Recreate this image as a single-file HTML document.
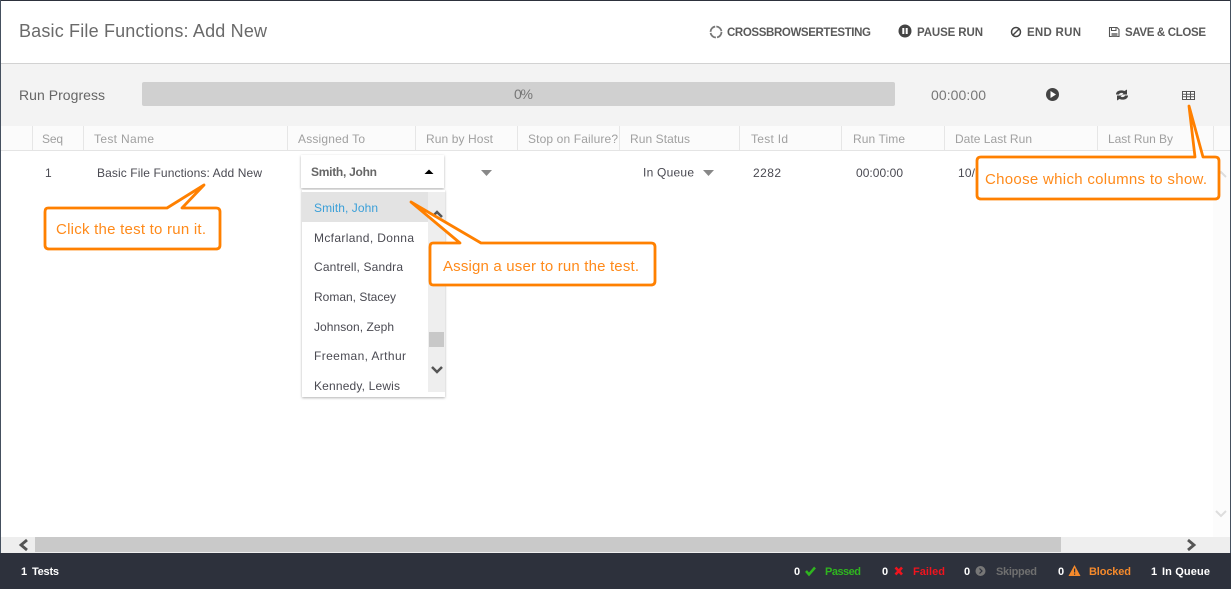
<!DOCTYPE html>
<html><head><meta charset="utf-8"><style>
html,body{margin:0;padding:0;background:#fff;width:1231px;height:589px;overflow:hidden}
svg{display:block}
text{font-family:"Liberation Sans",sans-serif}
.h{font-size:12px;fill:#a0a0a0}
.c{font-size:12px;fill:#4a4a52}
.b{font-size:11.5px;font-weight:bold;fill:#5a5a5a}
.o{font-size:15px;fill:#ff8a1a}
.f{font-size:11px;font-weight:bold}
.call{fill:#fff;stroke:#ff8000;stroke-width:2.800;stroke-linejoin:round}
</style></head><body>
<svg width="1231" height="589" viewBox="0 0 1231 589" xmlns="http://www.w3.org/2000/svg">
<defs>
<filter id="s" x="-10%" y="-10%" width="120%" height="120%"><feDropShadow dx="0" dy="1" stdDeviation="1.2" flood-color="#000" flood-opacity=".3"/></filter>
</defs>
<rect width="1231" height="589" fill="#fff"/>
<rect y="64" width="1231" height="62" fill="#f3f3f3"/>
<rect y="63" width="1231" height="1" fill="#d2d2d2"/>
<rect y="126" width="1231" height="24" fill="#fbfbfb"/>
<rect y="150" width="1231" height="1" fill="#e4e4e4"/>
<g fill="#e6e6e6">
<rect x="32" y="126" width="1" height="24"/><rect x="83" y="126" width="1" height="24"/><rect x="287" y="126" width="1" height="24"/><rect x="415" y="126" width="1" height="24"/><rect x="517" y="126" width="1" height="24"/><rect x="619" y="126" width="1" height="24"/><rect x="739" y="126" width="1" height="24"/><rect x="841" y="126" width="1" height="24"/><rect x="944" y="126" width="1" height="24"/><rect x="1097" y="126" width="1" height="24"/><rect x="1213" y="126" width="1" height="24"/>
</g>
<rect x="1213" y="151" width="17" height="386" fill="#fcfcfc"/>

<text x="19" y="37" font-size="18" fill="#6a6a6a" textLength="248">Basic File Functions: Add New</text>
<text class="b" x="727" y="36" textLength="144">CROSSBROWSERTESTING</text>
<text class="b" x="917" y="36" textLength="66">PAUSE RUN</text>
<text class="b" x="1027" y="36" textLength="54">END RUN</text>
<text class="b" x="1125" y="36" textLength="81">SAVE &amp; CLOSE</text>
<circle cx="716" cy="32" r="5.500" fill="none" stroke="#777" stroke-width="1.800" stroke-dasharray="7.500 1.200"/>
<circle cx="905" cy="31" r="6.500" fill="#444"/><rect x="902.300" y="28" width="2" height="6" fill="#fff"/><rect x="905.700" y="28" width="2" height="6" fill="#fff"/>
<circle cx="1016" cy="32" r="4.500" fill="none" stroke="#444" stroke-width="1.500"/><path d="M1013 35L1019 29" stroke="#444" stroke-width="1.500"/>
<path d="M1109.500 27.500H1117L1119 29.500V36.500H1109.500Z" fill="none" stroke="#555" stroke-width="1.100"/><rect x="1111.500" y="27.500" width="4.500" height="3" fill="none" stroke="#555"/><rect x="1111.500" y="33" width="6" height="3.500" fill="#888"/>

<text x="19" y="100" font-size="14" fill="#666" textLength="86">Run Progress</text>
<rect x="142" y="82" width="753" height="24" rx="2" fill="#d0d0d0"/>
<text x="514" y="99" font-size="14" fill="#777" textLength="19">0%</text>
<text x="931" y="100" font-size="14" fill="#777" textLength="55">00:00:00</text>
<circle cx="1052.500" cy="94.500" r="6.500" fill="#444"/><path d="M1050.500 91V98L1056 94.500Z" fill="#fff"/>
<path d="M1116 94.500C1116 90.500 1121 89.500 1124.500 91L1127 89.500V94.500H1122L1123.500 93.200C1121.500 92.500 1119.500 93 1119 94.500Z" fill="#444"/>
<path d="M1128 95.500C1128 99.500 1123 100.500 1119.500 99L1117 100.500V95.500H1122L1120.500 96.800C1122.500 97.500 1124.500 97 1125 95.500Z" fill="#444"/>
<rect x="1182.500" y="91.500" width="12" height="8" fill="#fff" stroke="#555"/>
<path d="M1182.500 94.200H1194.500M1182.500 96.800H1194.500M1186.500 91.500V99.500M1190.500 91.500V99.500" stroke="#555" fill="none"/>

<text class="h" x="42" y="143" textLength="21">Seq</text>
<text class="h" x="94" y="143" textLength="60">Test Name</text>
<text class="h" x="298" y="143" textLength="67">Assigned To</text>
<text class="h" x="426" y="143" textLength="67">Run by Host</text>
<text class="h" x="528" y="143" textLength="90">Stop on Failure?</text>
<text class="h" x="630" y="143" textLength="60">Run Status</text>
<text class="h" x="751" y="143" textLength="37">Test Id</text>
<text class="h" x="853" y="143" textLength="52">Run Time</text>
<text class="h" x="955" y="143" textLength="77">Date Last Run</text>
<text class="h" x="1108" y="143" textLength="65">Last Run By</text>

<text class="c" x="45" y="177">1</text>
<text class="c" x="97" y="177" textLength="165">Basic File Functions: Add New</text>
<rect x="301" y="155" width="143" height="33" fill="#fff" filter="url(#s)"/>
<text class="b" x="311" y="176" textLength="66" style="font-size:12px;fill:#666">Smith, John</text>
<path d="M424.500 174L429 169.500L433.500 174Z" fill="#000"/>
<path d="M481 170H492L486.500 176Z" fill="#888"/>
<text class="c" x="643" y="176.500" textLength="51">In Queue</text>
<path d="M703 170H714L708.500 176Z" fill="#888"/>
<text class="c" x="753" y="177" textLength="28">2282</text>
<text class="c" x="856" y="177" textLength="47">00:00:00</text>
<text class="c" x="958" y="177" textLength="17">10/</text>

<rect x="302" y="190" width="143" height="207" fill="#fff" filter="url(#s)"/>
<rect x="302" y="192" width="126" height="30" fill="#e3e3e3"/>
<rect x="428" y="192" width="17" height="200" fill="#eee"/>
<rect x="429" y="332" width="15" height="15" fill="#c8c8c8"/>
<path d="M432 217L437 212L442 217" fill="none" stroke="#555" stroke-width="2.500"/>
<path d="M432 367L437 372L442 367" fill="none" stroke="#555" stroke-width="2.500"/>
<text class="c" x="314" y="212" textLength="64" style="fill:#3a9fd8">Smith, John</text>
<text class="c" x="314" y="242" textLength="100">Mcfarland, Donna</text>
<text class="c" x="314" y="271" textLength="89">Cantrell, Sandra</text>
<text class="c" x="314" y="301" textLength="82">Roman, Stacey</text>
<text class="c" x="314" y="331" textLength="80">Johnson, Zeph</text>
<text class="c" x="314" y="360" textLength="92">Freeman, Arthur</text>
<text class="c" x="314" y="390" textLength="86">Kennedy, Lewis</text>

<path d="M1216 177L1221 172L1226 177" fill="none" stroke="#ddd" stroke-width="2"/>
<path d="M1216 511L1221 516L1226 511" fill="none" stroke="#ddd" stroke-width="2"/>
<rect y="537" width="1231" height="16" fill="#eee"/>
<rect x="35" y="537" width="1026" height="15" fill="#c9c9c9"/>
<path d="M27 540L21 545L27 550" fill="none" stroke="#555" stroke-width="2.800"/>
<path d="M1188 540L1194 545L1188 550" fill="none" stroke="#555" stroke-width="2.800"/>

<rect y="553" width="1231" height="36" fill="#2d313c"/>
<rect y="0" width="1231" height="1" fill="#2d313c"/>
<rect x="0" y="0" width="1" height="553" fill="#45505f"/>
<rect x="1230" y="0" width="1" height="553" fill="#45505f"/>
<text class="f" x="21" y="575" fill="#fff">1</text>
<text class="f" x="32" y="575" fill="#fff" textLength="27">Tests</text>
<text class="f" x="794" y="575" fill="#fff">0</text>
<path d="M806 571L809 574.500L815 567.500" fill="none" stroke="#2fb51f" stroke-width="2.500"/>
<text class="f" x="825" y="575" fill="#2fb51f" textLength="36">Passed</text>
<text class="f" x="882" y="575" fill="#fff">0</text>
<path d="M895.500 567.500L902 574.500M902 567.500L895.500 574.500" stroke="#f0141e" stroke-width="2.600"/>
<text class="f" x="913" y="575" fill="#f0141e" textLength="32">Failed</text>
<text class="f" x="964" y="575" fill="#fff">0</text>
<circle cx="980.500" cy="571" r="5" fill="#777"/><path d="M979.500 568.500L982 571L979.500 573.500" fill="none" stroke="#2d313c" stroke-width="1.200"/>
<text class="f" x="996" y="575" fill="#6f6f6f" textLength="41">Skipped</text>
<text class="f" x="1058" y="575" fill="#fff">0</text>
<path d="M1074.500 565L1080.500 576H1068.500Z" fill="#f58a2c"/><rect x="1074" y="568.500" width="1.200" height="4" fill="#2d313c"/><rect x="1074" y="573.500" width="1.200" height="1.200" fill="#2d313c"/>
<text class="f" x="1089" y="575" fill="#f58a2c" textLength="42">Blocked</text>
<text class="f" x="1151" y="575" fill="#fff">1</text>
<text class="f" x="1162" y="575" fill="#fff" textLength="48">In Queue</text>

<path class="call" d="M48 208H167L204 185L182 208H216Q220 208 220 212V245Q220 249 216 249H49Q45 249 45 245V212Q45 208 48 208Z"/>
<text class="o" x="56" y="234" textLength="150">Click the test to run it.</text>
<path class="call" d="M433 243H460L411 202L481 243H651Q655 243 655 247V281Q655 285 651 285H433Q430 285 430 281V247Q430 243 433 243Z"/>
<text class="o" x="443" y="271" textLength="196">Assign a user to run the test.</text>
<path class="call" d="M981 157H1195L1189 106L1203 157H1215Q1219 157 1219 161V195Q1219 199 1215 199H981Q977 199 977 195V161Q977 157 981 157Z"/>
<text class="o" x="985" y="184" textLength="222">Choose which columns to show.</text>
</svg>
</body></html>
